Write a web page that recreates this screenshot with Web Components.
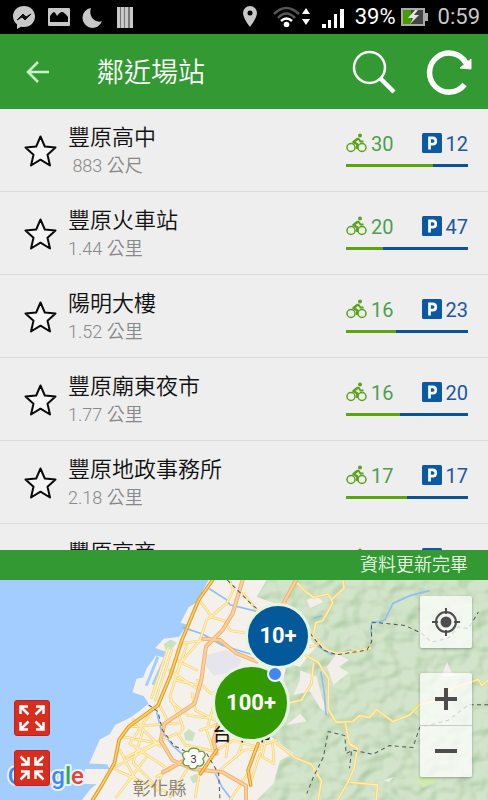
<!DOCTYPE html>
<html lang="zh-Hant">
<head>
<meta charset="utf-8">
<meta name="viewport" content="width=device-width, initial-scale=1">
<title>鄰近場站</title>
<style>
html, body { margin: 0; height: 100%; }
body { font-family: Roboto, "Noto Sans CJK TC", sans-serif; background: #eee; }
</style>
</head>
<body>
<bike-app></bike-app>
<script>
const define = (name, html, setup) => {
  const template = document.createElement('template');
  template.innerHTML = html;
  customElements.define(name, class extends HTMLElement {
    connectedCallback() {
      if (this.shadowRoot) return;
      this.attachShadow({ mode: 'open' }).append(template.content.cloneNode(true));
      if (setup) setup(this, this.shadowRoot);
    }
  });
};

define('phone-status', `
<style>
:host { display: flex; justify-content: space-between; align-items: center; height: 34px; background: #000; color: #c8c8c8; font-size: 22px; line-height: 34px; padding: 0 8px 0 12px; }
div { display: flex; align-items: center; gap: 10px; }
.left { gap: 12px; }
.pair { gap: 5px; }
.white { color: #fff; }
svg { display: block; }
</style>
<div class="left">
  <svg width="24" height="24" viewBox="0 0 24 24"><path fill="#c8c8c8" d="M12 1C5.500 1 1 5.600 1 11.300c0 3.400 1.600 6 4 8V24l4-2.300c1 .2 2 .3 3 .3 6.500 0 11-4.700 11-10.500S18.500 1 12 1z"/><path d="M5 15l6-6 3 3 5-3-6 6-3-3z" fill="#111" stroke="#111"/></svg>
  <svg width="22" height="24" viewBox="0 0 22 24"><path fill="#c8c8c8" d="M1 3h20q1 0 1 1v16q0 1-1 1H1q-1 0-1-1V4q0-1 1-1z"/><path fill="#000" d="M2 17V11q3-4 4-4t3 4q3-4 5-4t6 5v5z"/></svg>
  <svg width="22" height="24" viewBox="0 0 22 24"><path fill="#c8c8c8" d="M9 3A10 10 0 1 0 20 16C13 19 6 11 9 3z"/></svg>
  <svg width="18" height="24" viewBox="0 0 18 24"><path fill="#777" d="M1 2h16v21H1z"/><path fill="#c8c8c8" d="M1 2h3v21H1zM5 2h3v21H5zM9 2h3v21H9zM14 2h3v21h-3z"/></svg>
</div>
<div>
  <svg width="20" height="24" viewBox="0 0 20 24"><path fill="#c8c8c8" fill-rule="evenodd" d="M9 1a7 7 0 0 0-7 7c0 5 7 14 7 14s7-9 7-14a7 7 0 0 0-7-7zm0 4.500a2.500 2.500 0 1 1 0 5 2.500 2.500 0 0 1 0-5z"/></svg>
  <svg width="40" height="24" viewBox="0 0 40 24"><g fill="none" stroke-width="2.500"><path stroke="#555" d="M3 9Q15-3 28 9M7 13Q15 4 24 13"/><path stroke="#fff" d="M10 16Q15.500 11 21 16"/></g><circle cx="15.500" cy="19.500" r="2.800" fill="#fff"/><path fill="#fff" d="M35 3l4 6h-8zM35 20l4-6h-8z"/></svg>
  <svg width="24" height="24" viewBox="0 0 24 24"><path fill="#fff" d="M1 19h4v4H1zM7 15h3v8H7zM13 9h3v14h-3zM19 4h4v19h-4z"/></svg>
  <div class="pair"><span class="white">39%</span>
  <svg width="27" height="24" viewBox="0 0 27 24"><path fill="#aaa" d="M0 3h24v5h3v8h-3v5H0z"/><path fill="#444" d="M2 5h20v14H2z"/><path fill="#459b00" d="M2 5h8v14H2z"/><path fill="#e3e3e3" d="M14 5l-7 8h5l-3 6 9-9h-5l4-5z"/></svg></div>
  <span>0:59</span>
</div>`);

define('app-header', `
<style>
:host { display: flex; align-items: center; height: 75px; background: #393; color: #fff; padding: 0 16px; }
h1 { flex: 1; margin: 2px 0 0 37px; font-size: 27px; line-height: 40px; font-weight: 350; }
button { border: 0; padding: 0; background: none; display: block; }
.refresh { margin-left: 27px; }
svg { display: block; }
</style>
<button aria-label="返回"><svg width="44" height="44" viewBox="0 0 44 44"><path d="M33 22H13M22 12L12 22l10 10" fill="none" stroke="#c9f0c6" stroke-width="2.500"/></svg></button>
<h1><slot></slot></h1>
<button aria-label="搜尋"><svg width="52" height="52" viewBox="0 0 52 52" fill="none" stroke="#fff"><circle cx="22.500" cy="21.500" r="15.500" stroke-width="2.500"/><path d="M33 32l14 14" stroke-width="4.500"/></svg></button>
<button class="refresh" aria-label="重新整理"><svg width="46" height="46" viewBox="0 0 46 46"><path d="M38.500 35.500A19.500 19.500 0 1 1 40 14" fill="none" stroke="#fff" stroke-width="5.500"/><path fill="#fff" d="M34 19l11-9v10z" stroke="#fff"/></svg></button>`);

define('station-row', `
<style>
:host { display: flex; box-sizing: border-box; height: 83px; padding: 14px 20px 0 24px; border-bottom: 1px solid #dadada; background: #eee; }
button { border: 0; padding: 0; margin: 10px 11px 0 0; width: 33px; height: 36px; background: none; }
svg { display: block; }
.info { flex: 1; min-width: 0; }
.name { font-size: 22px; line-height: 30px; color: #111; font-weight: 350; }
.distance { font-size: 18px; line-height: 25px; color: #888; font-weight: 350; white-space: pre; }
.stats { width: 122px; padding-top: 7px; }
.counts { display: flex; justify-content: space-between; font-size: 20px; line-height: 26px; }
.count { display: flex; align-items: center; gap: 4px; }
.count span { padding-top: 2px; line-height: 24px; }
.bikes { color: #4c9f50; } .spots { color: #1d57a0; }
.bar { display: flex; height: 3px; margin-top: 8px; background: #0c5297; }
.fill { background: #5ca50d; }
</style>
<button aria-label="加入最愛"><svg width="33" height="34" viewBox="0 0 33 34"><path d="M16.500 2.500l4.300 10 10.700 1-8 7.200 2.500 10.800-9.500-5.800L7 31.500l2.500-10.800-8-7.200 10.700-1z" fill="#f5f5f5" stroke="#0a0a0a" stroke-width="2" stroke-linejoin="round"/></svg></button>
<div class="info"><div class="name"></div><div class="distance"></div></div>
<div class="stats">
  <div class="counts">
    <div class="count bikes"><svg width="21" height="20" viewBox="0 0 21 20" fill="none" stroke="#59a21a"><circle cx="5" cy="14.500" r="4" stroke-width="1.500"/><circle cx="16" cy="14.500" r="4" stroke-width="1.500"/><circle cx="14" cy="2.500" r="2" fill="#59a21a" stroke="none"/><path d="M12 5.500L7.500 9l4 2.500-.5 4.500" stroke-width="2.500" stroke-linejoin="round"/><path d="M12 5l2.500 3.500h3" stroke-width="2"/></svg><span class="b"></span></div>
    <div class="count spots"><svg width="20" height="20" viewBox="0 0 20 20"><rect width="20" height="20" rx="1.500" fill="#0b59a3"/><path fill="none" stroke="#fff" stroke-width="2.700" d="M7.500 16.500V4.800h3q3.300 0 3.300 3.200t-3.300 3.200h-3"/></svg><span class="p"></span></div>
  </div>
  <div class="bar"><div class="fill"></div></div>
</div>`, (el, root) => {
  const b = +el.getAttribute('bikes'), p = +el.getAttribute('spots');
  root.querySelector('.name').textContent = el.getAttribute('name');
  root.querySelector('.distance').textContent = el.getAttribute('distance');
  root.querySelector('.b').textContent = b;
  root.querySelector('.p').textContent = p;
  root.querySelector('.fill').style.flex = '0 0 ' + Math.round(100 * b / (b + p)) + '%';
});

define('update-bar', `
<style>:host { display: block; background: #393; color: #e9fbe7; font-size: 18px; line-height: 30px; font-weight: 350; text-align: right; padding: 0 20px; }</style><slot></slot>`);

define('map-pin', `
<style>
:host { display: block; position: absolute; transform: translate(-50%, -50%); }
button { display: block; box-sizing: content-box; padding: 0; border: 3px solid #e6f5e2; border-radius: 50%; width: 60px; height: 60px; background: #03599a; color: #fff; font: 700 22px/60px Roboto, sans-serif; }
:host([kind="large"]) button { width: 72px; height: 72px; background: #390; }
:host([kind="me"]) button { width: 12px; height: 12px; border: 2px solid #eef6ff; background: #4285f4; }
</style><button><slot></slot></button>`);

define('map-art', `
<style>:host, svg { display: block; width: 100%; height: 100%; } text { font-family: Roboto, "Noto Sans CJK TC", sans-serif; }</style>
<svg viewBox="0 30 1464 660" preserveAspectRatio="xMidYMid slice">
<defs>
<filter id="relief" x="0" y="0" width="100%" height="100%" color-interpolation-filters="sRGB"><feTurbulence type="fractalNoise" baseFrequency=".018 .02" numOctaves="2" seed="8"/><feDiffuseLighting lighting-color="#fff" surfaceScale="16" diffuseConstant="1.100"><feDistantLight azimuth="225" elevation="58"/></feDiffuseLighting><feColorMatrix values=".22 0 0 0 .605  .15 0 0 0 .745  .22 0 0 0 .57  0 0 0 0 1"/><feComposite in2="SourceGraphic" operator="in"/></filter>
</defs>
<rect y="30" width="1464" height="660" fill="#a3ccff"/>
<path fill="#f4f0ec" d="M626 30L606 66 588 98 566 112 542 158 564 164 548 184 538 200 492 206 466 234 500 246 492 262 468 256 440 296 430 322 410 326 398 366 432 378 446 400 420 422 392 442 346 464 330 492 300 508 268 580 322 582 330 596 256 596 244 640 290 642 272 656 246 690H1464V30z"/>
<path fill="#a3ccff" d="M470 258l8 5-35 85-8-2zM488 270l8 5-34 70-7-3z"/>
<path fill="#d0e4ce" filter="url(#relief)" d="M800 30L770 80 850 110 860 160 910 180 950 230 930 250 900 290 860 280 850 330 820 380 870 410 850 460 800 490 880 550 840 570 820 640 770 690H1464V30z"/>
<g fill="#f2efea"><path d="M1010 250l36 20-30 20 30 18-46 36-20-54zM900 300l50 20 18 70 16 40-24-16-30-50-50 10 20-44zM920 90l30-12 20 18-40 18zM1330 300l10-24 14 30 20 10-50 4zM900 430l20 24-60 10zM1150 630l30-10-14 16z"/></g>
<path fill="#e6e4ec" d="M620 255l60-15 46 30-20 34-64 12-24-28z"/>
<g fill="#c9e2c4"><path d="M492 222l20-14 18 10-14 18-20 2zM552 490l14-14 20 12-8 24-22-2zM570 620l20-10 10 24-22 4z"/></g>
<g fill="#cfe9ae"><path d="M1240 400l26 14-4 32-30-24zM1240 620l34-8 40 20-46 20z"/></g>
<g fill="none" stroke="#8fbdf4" stroke-width="5" stroke-linejoin="round"><path d="M628 56l50 32 12 16 80 20M548 172l60 20 60 34 90 28M470 424l14 56 34 46 30 26M646 610l20 40 30 40M962 304l10 60 6 72M1112 190l2-30 40-10 24-50 54-24 56-14M950 226l44 28 60-14M940 145l28-8" /></g>
<g fill="none" stroke-linejoin="round" stroke-linecap="round">
<g stroke="#f5d27c" stroke-width="8"><path id="m" d="M690 36l10 24-20 40-60 50-20 60M730 70l40 50M600 92l36 50 36 10 20 30 40 6M544 220l60-8M516 240l-50 150M530 270l60 30M526 330l64 14M505 232l-50 150M600 210l-60 70-30 100 30 64M560 226l-30 90M508 300l90 60M476 400l30 56M512 392l54 44 60 8M540 444l10 30-14 20 20 30 90 20M450 430l-60 90 120 80M390 470l150-12M372 500l110 20M400 448l80 80M430 478l-30 100 80 80M380 560l150-70M330 600l140-80M360 540l70 130M350 600l150 66M440 560l-90 120M470 620l90-50M560 600l-50 80M600 600l-14 80M590 560l-100 40-20 60M576 370l10 50 60 30M592 330l40 40 30-8M600 480l60-20M640 410l-20 70 20 60M650 540l50-30 70 20 60-20M690 480l-12 80M710 560l30-70M800 500l-14 60 36 20-4-60M780 550l-30 90M660 600l70-60 50-4M690 690l60-90M830 520l54 42 50 20 30 50-10 58M886 34l30 30 24 18 44-10 14 26-30 54-20 6-10 40 40 40 30 12 60-6 42-10M1028 30l4 24-38 36M900 246l54 30 32 50-2 90 24 40 50-2 20-18 30 6 20-24 50 36 50-20 30-30 40-10 60-40 76-26 10 18 30-24M940 280l-6 60-30 50-44 10M1036 460l12 60 24 14-10 60-20 44-30 52M1052 636l80 8-4 46M1072 534l-22-10M860 240l90-14" /></g>
<use href="#m" stroke="#fff0b1" stroke-width="4"/>
<g stroke="#eaaf70" stroke-width="12"><path id="o" d="M728 30l-30 100-30 50-50 50-14 100-20 70-90 60-12 50 36 60 60 26 90 10 70 40 0 44M610 206l50 4 50 40 60 24M888 30l-40 74M650 550l-10-40 16-50M560 566l-70 40"/></g><use href="#o" stroke="#ffce94" stroke-width="7"/>
<g stroke="#dc9b36" stroke-width="11"><path id="h" d="M638 30l-42 60-50 120-36 110-36 86-86 62-30 40-14 70-40 70-26 42M774 520l-30 80 8 44M650 540l-48 70"/></g><use href="#h" stroke="#ffd057" stroke-width="5"/>
</g>
<g fill="none" stroke="#4d5a58" stroke-width="3" stroke-dasharray="12 10"><path d="M682 30l76 76 40 30M930 190l40 50 40 14 90-14 14-24 0-60 100 10 50 24 30 26 50-12 30-34 30 6 30-50M1464 404h-60l-60 46-86 22-20 60-70-6-50 26-60-12-20 10-4-54-50-12-14 76-30 60-20 50M446 404l28 20 14 56 34 46 40 20M620 550l36 60 4 80M1054 544l-6 50"/></g>
<path fill="#fff" stroke="#6c9a3c" stroke-width="4" d="M566 544c2-14 30-14 32 0 16-6 24 12 10 22 10 12-4 26-16 20-4 14-24 12-26 0-14 4-22-10-12-20-12-12-4-26 12-22z"/>
<text x="581" y="577" text-anchor="middle" font-size="33" fill="#333">3</text>
<text x="637" y="513" font-size="60" fill="#111" font-weight="400">台中市</text>
<text x="398" y="675" font-size="54" fill="#837c75" font-weight="350">彰化縣</text>
<g font-size="72" font-weight="500" stroke="#e6f2ff" stroke-width="12" paint-order="stroke" stroke-linejoin="round"><text x="24" y="642"><tspan fill="#4285f4">G</tspan><tspan fill="#ea4335">o</tspan><tspan fill="#fbbc05">o</tspan><tspan fill="#4285f4">g</tspan><tspan fill="#34a853">l</tspan><tspan fill="#ea4335">e</tspan></text></g>
</svg>`);

define('map-panel', `
<style>
:host { display: block; position: relative; overflow: hidden; min-height: 0; }
map-art { position: absolute; inset: 0; }
.controls { position: absolute; top: 16px; right: 16px; display: flex; flex-direction: column; gap: 25px; }
.tools { position: absolute; bottom: 14px; left: 14px; display: flex; flex-direction: column; gap: 14px; }
.group { border-radius: 2px; background: rgba(255,255,255,.74); box-shadow: 0 1px 3px rgba(0,0,0,.3); }
button { display: block; padding: 0; border: 0; background: none; }
.group button { width: 52px; height: 52px; }
.group button + button { border-top: 1px solid #c5cdc3; }
.tools button { width: 36px; height: 36px; border: 1px solid #b8231d; border-radius: 3px; background: #d92d20; }
svg { display: block; margin: auto; }
.ten { left: 278px; top: 56px; } .hundred { left: 251px; top: 123px; } .me { left: 275px; top: 94px; }
</style>
<map-art></map-art>
<map-pin class="hundred" kind="large">100+</map-pin>
<map-pin class="ten">10+</map-pin>
<map-pin class="me" kind="me"></map-pin>
<div class="controls">
  <div class="group"><button aria-label="我的位置"><svg width="28" height="28" viewBox="0 0 28 28" fill="none" stroke="#4d4d4d" stroke-width="2"><circle cx="14" cy="14" r="10"/><circle cx="14" cy="14" r="5.500" fill="#4d4d4d" stroke="none"/><path d="M14 0v6M14 22v6M0 14h6M22 14h6"/></svg></button></div>
  <div class="group"><button aria-label="放大"><svg width="24" height="24" viewBox="0 0 24 24"><path d="M12 1v22M1 12h22" stroke="#4d4d4d" stroke-width="4"/></svg></button><button aria-label="縮小"><svg width="24" height="24" viewBox="0 0 24 24"><path d="M1 12h22" stroke="#4d4d4d" stroke-width="4"/></svg></button></div>
</div>
<div class="tools">
  <button aria-label="展開地圖"><svg width="34" height="34" viewBox="0 0 34 34" fill="none" stroke="#fff" stroke-width="2.500"><path d="M5.500 13V5.500H13M5.500 5.500l8 8M21 5.500h7.500V13M28.500 5.500l-8 8M5.500 21v7.500H13M5.500 28.500l8-8M21 28.500h7.500V21M28.500 28.500l-8-8"/></svg></button>
  <button aria-label="收合地圖"><svg width="34" height="34" viewBox="0 0 34 34" fill="none" stroke="#fff" stroke-width="2.500"><path d="M13.500 6v7.500H6M13.500 13.500l-8-8M20.500 6v7.500H28M20.500 13.500l8-8M13.500 28v-7.500H6M13.500 20.500l-8 8M20.500 28v-7.500H28M20.500 20.500l8 8"/></svg></button>
</div>`);

define('bike-app', `
<style>
:host { display: grid; grid-template-rows: auto auto 2fr auto 1fr; grid-template-columns: 100%; height: 100vh; }
main { min-height: 0; overflow: hidden; }
</style>
<phone-status></phone-status>
<app-header>鄰近場站</app-header>
<main>
  <station-row name="豐原高中" distance=" 883 公尺" bikes="30" spots="12"></station-row>
  <station-row name="豐原火車站" distance="1.44 公里" bikes="20" spots="47"></station-row>
  <station-row name="陽明大樓" distance="1.52 公里" bikes="16" spots="23"></station-row>
  <station-row name="豐原廟東夜市" distance="1.77 公里" bikes="16" spots="20"></station-row>
  <station-row name="豐原地政事務所" distance="2.18 公里" bikes="17" spots="17"></station-row>
  <station-row name="豐原高商" distance="2.30 公里" bikes="18" spots="18"></station-row>
</main>
<update-bar>資料更新完畢</update-bar>
<map-panel></map-panel>`);
</script>
</body>
</html>
